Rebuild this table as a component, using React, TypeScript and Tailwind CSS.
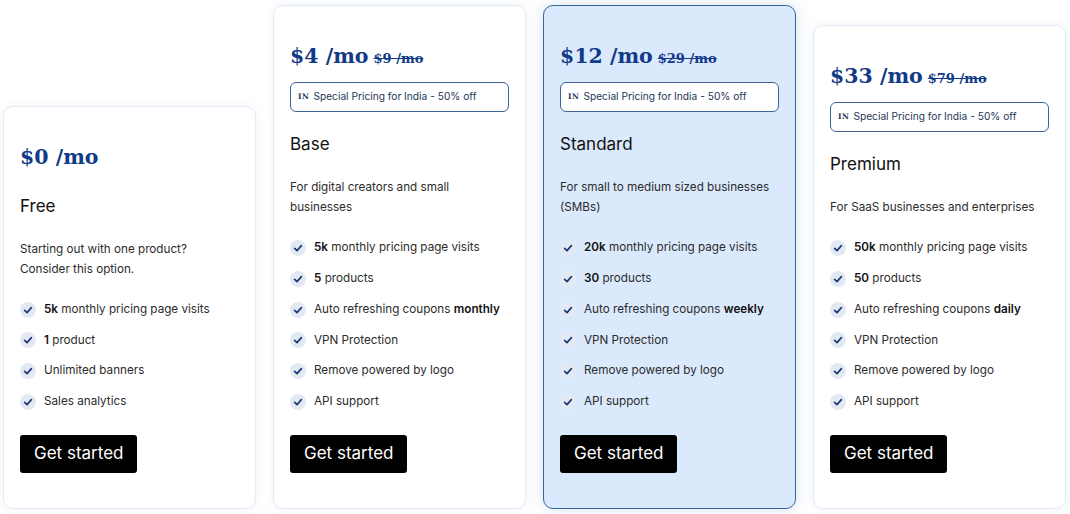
import React from 'react';

type Feature = { bold?: string; text: string; boldAfter?: string };

type Plan = {
  price: string;
  oldPrice?: string;
  name: string;
  desc: string;
  features: Feature[];
  highlight?: boolean;
};

const plans: Plan[] = [
  {
    price: '$0 /mo',
    name: 'Free',
    desc: 'Starting out with one product? Consider this option.',
    features: [
      { bold: '5k', text: ' monthly pricing page visits' },
      { bold: '1', text: ' product' },
      { text: 'Unlimited banners' },
      { text: 'Sales analytics' },
    ],
  },
  {
    price: '$4 /mo',
    oldPrice: '$9 /mo',
    name: 'Base',
    desc: 'For digital creators and small businesses',
    features: [
      { bold: '5k', text: ' monthly pricing page visits' },
      { bold: '5', text: ' products' },
      { text: 'Auto refreshing coupons ', boldAfter: 'monthly' },
      { text: 'VPN Protection' },
      { text: 'Remove powered by logo' },
      { text: 'API support' },
    ],
  },
  {
    price: '$12 /mo',
    oldPrice: '$29 /mo',
    name: 'Standard',
    desc: 'For small to medium sized businesses (SMBs)',
    highlight: true,
    features: [
      { bold: '20k', text: ' monthly pricing page visits' },
      { bold: '30', text: ' products' },
      { text: 'Auto refreshing coupons ', boldAfter: 'weekly' },
      { text: 'VPN Protection' },
      { text: 'Remove powered by logo' },
      { text: 'API support' },
    ],
  },
  {
    price: '$33 /mo',
    oldPrice: '$79 /mo',
    name: 'Premium',
    desc: 'For SaaS businesses and enterprises',
    features: [
      { bold: '50k', text: ' monthly pricing page visits' },
      { bold: '50', text: ' products' },
      { text: 'Auto refreshing coupons ', boldAfter: 'daily' },
      { text: 'VPN Protection' },
      { text: 'Remove powered by logo' },
      { text: 'API support' },
    ],
  },
];

const Check = () => (
  <svg width="16" height="16" viewBox="0 0 16 16" className="shrink-0">
    <circle cx="8" cy="8" r="8" fill="#e3e9f3" />
    <path d="M4.6 8.3 L7 10.6 L11.4 5.6" fill="none" stroke="#1e3a7b" strokeWidth="1.7" strokeLinecap="round" strokeLinejoin="round" />
  </svg>
);

const PlanCard: React.FC<{ plan: Plan }> = ({ plan }) => {
  return (
    <div
      className={
        plan.highlight
          ? 'w-[253px] shrink-0 rounded-[10px] border border-[#3567a0] bg-[#dbe9fc] px-4 pt-[35px] pb-[35px] shadow-[0_0_14px_rgba(96,140,200,0.25)]'
          : 'w-[253px] shrink-0 rounded-[10px] border border-[#e3ebf4] bg-white px-4 pt-[35px] pb-[35px] shadow-[0_0_8px_rgba(180,200,225,0.25)]'
      }
    >
      <div className="flex h-8 items-baseline gap-[5px] font-['DejaVu_Serif',serif] font-bold text-[#113a88]">
        <span className="text-[20.5px]">{plan.price}</span>
        {plan.oldPrice && <span className="text-[13px] line-through">{plan.oldPrice}</span>}
      </div>
      {plan.oldPrice && (
        <div className="mt-[9px] flex h-[30px] items-center gap-[4px] rounded-[6px] border border-[#3d6494] bg-white px-[7px] text-[10.2px] text-[#1f3556]">
          <span className="font-['DejaVu_Serif',serif] text-[7.5px] font-bold tracking-[0.5px] text-[#1f3556]">IN</span>
          <span>Special Pricing for India - 50% off</span>
        </div>
      )}
      <div className="mt-[18px] text-[17px] leading-7 text-[#111]">{plan.name}</div>
      <p className="mt-[19px] text-[11.7px] leading-5 text-[#2c2c2c]">{plan.desc}</p>
      <ul className="mt-[21px] flex flex-col gap-[10.8px]">
        {plan.features.map((f, i) => (
          <li key={i} className="flex h-5 items-center gap-2 text-[11.7px] text-[#2c2c2c]">
            <Check />
            <span>
              {f.bold && <b className="font-semibold text-[#111]">{f.bold}</b>}
              {f.text}
              {f.boldAfter && <b className="font-semibold text-[#111]">{f.boldAfter}</b>}
            </span>
          </li>
        ))}
      </ul>
      <button className="mt-[23px] h-[38px] rounded-[3px] bg-black px-[14px] text-[17px] text-white">
        Get started
      </button>
    </div>
  );
};

export default function App() {
  return (
    <div className="flex h-[514px] w-[1070px] items-end gap-[17px] bg-white px-[3px] pb-[5px] font-['Inter',sans-serif]">
      {plans.map((p) => (
        <PlanCard key={p.name} plan={p} />
      ))}
    </div>
  );
}
